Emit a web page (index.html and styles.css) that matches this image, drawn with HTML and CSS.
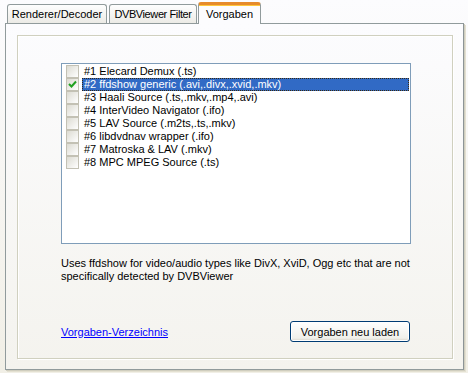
FILE: index.html
```html
<!DOCTYPE html>
<html lang="de">
<head>
    <meta charset="UTF-8">
    <title>Vorgaben</title>
    <link rel="stylesheet" href="styles.css">
</head>
<body>
    <div class="tabs">
        <div class="tab tab-renderer">Renderer/Decoder</div>
        <div class="tab tab-filter">DVBViewer Filter</div>
        <div class="tab tab-presets active">Vorgaben</div>
    </div>
    <div class="panel">
        <div class="group">
            <div class="list">
                <div class="item"><span class="check"></span><span class="label">#1 Elecard Demux (.ts)</span></div>
                <div class="item selected"><span class="check checked"><svg width="9" height="9" viewBox="0 0 9 9"><path d="M1 4 L3.5 6.5 L8 1.5" fill="none" stroke="#21a121" stroke-width="2"/></svg></span><span class="label">#2 ffdshow generic (.avi,.divx,.xvid,.mkv)</span></div>
                <div class="item"><span class="check"></span><span class="label">#3 Haali Source (.ts,.mkv,.mp4,.avi)</span></div>
                <div class="item"><span class="check"></span><span class="label">#4 InterVideo Navigator (.ifo)</span></div>
                <div class="item"><span class="check"></span><span class="label">#5 LAV Source (.m2ts,.ts,.mkv)</span></div>
                <div class="item"><span class="check"></span><span class="label">#6 libdvdnav wrapper (.ifo)</span></div>
                <div class="item"><span class="check"></span><span class="label">#7 Matroska &amp; LAV (.mkv)</span></div>
                <div class="item"><span class="check"></span><span class="label">#8 MPC MPEG Source (.ts)</span></div>
            </div>
            <p class="desc">Uses ffdshow for video/audio types like DivX, XviD, Ogg etc that are not specifically detected by DVBViewer</p>
            <div class="actions">
                <a href="#" class="link">Vorgaben-Verzeichnis</a>
                <button class="btn">Vorgaben neu laden</button>
            </div>
        </div>
    </div>
</body>
</html>
```
FILE: styles.css
```css
body {
    margin: 0;
    width: 468px;
    height: 373px;
    font-family: "Liberation Sans", Arial, sans-serif;
    font-size: 11px;
    color: #000;
    background: linear-gradient(#fcfcfe, #f1efe6);
    overflow: hidden;
}

.tabs {
    display: flex;
    align-items: flex-end;
    height: 23px;
    padding-left: 7px;
    position: relative;
    z-index: 1;
}

.tab {
    box-sizing: border-box;
    height: 19px;
    padding: 3px 0 0;
    margin-right: 2px;
    border: 1px solid #919b9c;
    border-bottom: none;
    border-radius: 3px 3px 0 0;
    background: linear-gradient(#fefefe, #ecebe6);
    text-align: center;
    white-space: nowrap;
    overflow: hidden;
}

.tab-renderer {
    width: 100px;
}

.tab-filter {
    width: 88px;
    letter-spacing: -0.4px;
}

.tab.active {
    width: 63px;
    height: 22px;
    margin-bottom: -1px;
    margin-left: -1px;
    border-top: 3px solid #e68b2c;
    background: #fcfcfe;
    box-shadow: inset 0 1px 0 #ffc73c;
}

.panel {
    box-sizing: border-box;
    margin: 0 4px 0 5px;
    height: 347px;
    padding: 11px 10px 10px 11px;
    border: 1px solid #919b9c;
    border-right-color: #8c9496;
    background: linear-gradient(#fcfcfe, #f4f3ee);
    box-shadow: 1px 1px 0 #d0cebf, 2px 2px 0 #e3e0d1;
}

.group {
    box-sizing: border-box;
    height: 324px;
    width: 436px;
    padding: 27px 0 0 43px;
    border: 1px solid #d0d0bf;
    box-shadow: 1px 1px 0 #fff, inset 1px 1px 0 #fff;
}

.list {
    box-sizing: border-box;
    width: 350px;
    height: 181px;
    padding-top: 1px;
    border: 1px solid #7f9db9;
    background: #fff;
}

.item {
    display: flex;
    align-items: center;
    height: 13px;
    padding-left: 4px;
}

.check {
    box-sizing: border-box;
    width: 13px;
    height: 13px;
    margin-right: 3px;
    border: 1px solid #c3c1b4;
    background: linear-gradient(135deg, #dcdbd2, #fff);
    display: flex;
    align-items: center;
    justify-content: center;
}

.label {
    box-sizing: border-box;
    height: 13px;
    line-height: 11px;
    padding: 0 1px;
    border: 1px solid transparent;
    white-space: nowrap;
}

.selected .label {
    flex: 1;
    margin-right: 1px;
    color: #fff;
    background: #316ac5;
    border: 1px dotted #3a2a10;
}

.desc {
    width: 350px;
    margin: 13px 0 0;
    line-height: 13px;
}

.actions {
    display: flex;
    align-items: center;
    justify-content: space-between;
    width: 349px;
    margin-top: 38px;
}

.link {
    color: #0000ff;
    text-decoration: underline;
}

.btn {
    width: 120px;
    height: 21px;
    padding: 0;
    font-family: inherit;
    font-size: 11px;
    color: #000;
    border: 1px solid #003c74;
    border-radius: 3px;
    background: linear-gradient(#fff, #f0f0ea 85%, #d6d0c5);
    box-shadow: inset 0 0 0 1px #fff;
}
```
